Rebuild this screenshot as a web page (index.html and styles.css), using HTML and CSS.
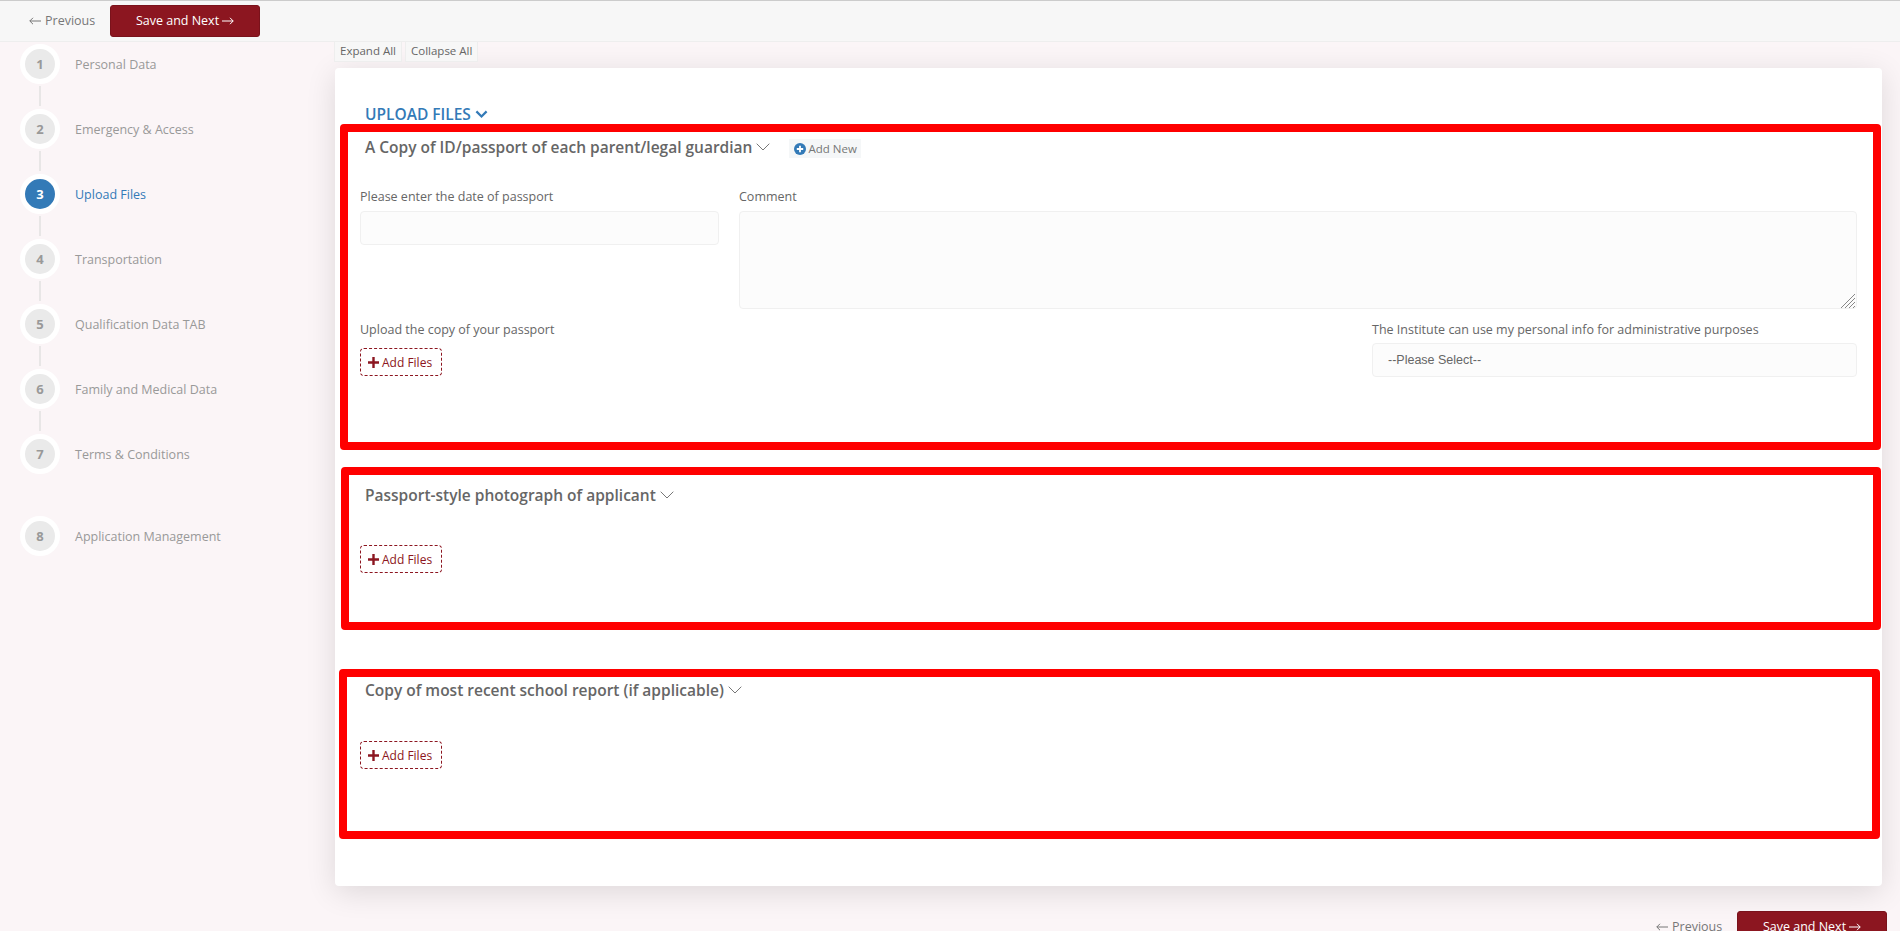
FILE: index.html
```html
<!DOCTYPE html>
<html lang="en">
<head>
<meta charset="utf-8">
<title>Upload Files</title>
<link rel="stylesheet" href="styles.css">
</head>
<body>
<header class="topbar">
  <a class="prev"><svg class="arrow" viewBox="0 0 12 8"><path d="M12 4H.8M4 .8.8 4 4 7.2"/></svg>Previous</a>
  <a class="save">Save and Next<svg class="arrow" viewBox="0 0 12 8"><path d="M0 4h11.2M8 .8 11.2 4 8 7.2"/></svg></a>
</header>
<div class="layout">
  <nav class="steps">
    <div class="step"><span class="dot">1</span><span class="step-name">Personal Data</span></div>
    <div class="step-line"></div>
    <div class="step"><span class="dot">2</span><span class="step-name">Emergency &amp; Access</span></div>
    <div class="step-line"></div>
    <div class="step active"><span class="dot">3</span><span class="step-name">Upload Files</span></div>
    <div class="step-line"></div>
    <div class="step"><span class="dot">4</span><span class="step-name">Transportation</span></div>
    <div class="step-line"></div>
    <div class="step"><span class="dot">5</span><span class="step-name">Qualification Data TAB</span></div>
    <div class="step-line"></div>
    <div class="step"><span class="dot">6</span><span class="step-name">Family and Medical Data</span></div>
    <div class="step-line"></div>
    <div class="step"><span class="dot">7</span><span class="step-name">Terms &amp; Conditions</span></div>
    <div class="step last"><span class="dot">8</span><span class="step-name">Application Management</span></div>
  </nav>
  <main class="content">
    <div class="tools">
      <button class="tool">Expand All</button>
      <button class="tool">Collapse All</button>
    </div>
    <section class="card">
      <h2 class="heading">UPLOAD FILES<svg class="chev-bold" viewBox="0 0 13 9"><path d="M1.400 1.400 6.500 6.500l5.100-5.100"/></svg></h2>

      <div class="doc-title first">
        <h3>A Copy of ID/passport of each parent/legal guardian</h3>
        <svg class="chev" viewBox="0 0 14 8"><path d="M.7.7 7 7l6.300-6.300"/></svg>
        <a class="add-new"><svg class="plus-circle" viewBox="0 0 12 12"><circle cx="6" cy="6" r="6"/><path d="M6 2.800v6.400M2.800 6h6.400"/></svg>Add New</a>
      </div>
      <div class="form-top">
        <div>
          <label class="label">Please enter the date of passport</label>
          <input class="field" type="text">
        </div>
        <div>
          <label class="label">Comment</label>
          <div class="area-wrap">
            <textarea class="area"></textarea>
            <svg class="grip" viewBox="0 0 14 14"><path d="M0 14 14 0M4 14 14 4M8 14l6-6M12 14l2-2"/></svg>
          </div>
        </div>
      </div>
      <div class="form-bottom">
        <div>
          <label class="label">Upload the copy of your passport</label>
          <a class="add-files near"><svg class="plus" viewBox="0 0 11 11"><path d="M5.500 0v11M0 5.500h11"/></svg>Add Files</a>
        </div>
        <div class="select-col">
          <label class="label">The Institute can use my personal info for administrative purposes</label>
          <select class="field picker"><option>--Please Select--</option></select>
        </div>
      </div>

      <div class="doc-title second">
        <h3>Passport-style photograph of applicant</h3>
        <svg class="chev" viewBox="0 0 14 8"><path d="M.7.7 7 7l6.300-6.300"/></svg>
      </div>
      <a class="add-files far"><svg class="plus" viewBox="0 0 11 11"><path d="M5.500 0v11M0 5.500h11"/></svg>Add Files</a>

      <div class="doc-title third">
        <h3>Copy of most recent school report (if applicable)</h3>
        <svg class="chev" viewBox="0 0 14 8"><path d="M.7.7 7 7l6.300-6.300"/></svg>
      </div>
      <a class="add-files far last-file"><svg class="plus" viewBox="0 0 11 11"><path d="M5.500 0v11M0 5.500h11"/></svg>Add Files</a>
    </section>
    <footer class="bottombar">
      <a class="prev"><svg class="arrow" viewBox="0 0 12 8"><path d="M12 4H.8M4 .8.8 4 4 7.2"/></svg>Previous</a>
      <a class="save">Save and Next<svg class="arrow" viewBox="0 0 12 8"><path d="M0 4h11.2M8 .8 11.2 4 8 7.2"/></svg></a>
    </footer>
  </main>
</div>
<div class="mark mark-a"></div>
<div class="mark mark-b"></div>
<div class="mark mark-c"></div>
</body>
</html>
```
FILE: styles.css
```css
* { box-sizing: border-box; }
html, body { height: 100%; overflow: hidden; }
body {
  margin: 0;
  background: #fbf5f7;
  color: #666;
  font: 12.500px/20px "Open Sans", sans-serif;
}
h2, h3 { margin: 0; }

.topbar {
  height: 42px;
  padding: 4px 0 0 29px;
  display: flex;
  align-items: flex-start;
  background: #f7f7f7;
  border-top: 1px solid #ccc;
  border-bottom: 1px solid #eee;
}
.prev {
  height: 32px;
  width: 81px;
  display: flex;
  align-items: center;
  gap: 4px;
  color: #777;
}
.save {
  width: 150px;
  height: 32px;
  display: flex;
  align-items: center;
  justify-content: center;
  gap: 3px;
  color: #fff;
  background: #8c1620;
  border: 1px solid #7a121b;
  border-radius: 3px;
}
.arrow { width: 12px; height: 8px; fill: none; stroke: currentColor; stroke-width: 1; }

.layout { display: flex; align-items: flex-start; }
.steps { width: 334px; flex: none; padding: 2px 0 0 20px; }
.step { display: flex; align-items: center; gap: 15px; color: #999; }
.step-name { padding-top: 2px; }
.dot {
  width: 40px;
  height: 40px;
  flex: none;
  display: flex;
  align-items: center;
  justify-content: center;
  background: #eaeaea;
  border: 5px solid #fff;
  border-radius: 50%;
  font-weight: 700;
  font-size: 13px;
}
.step-line { width: 2px; height: 20px; margin: 2px 0 3px 19px; background: #e8e6e6; }
.step.last { margin-top: 42px; }
.step.active { color: #337ab7; }
.step.active .dot { background: #337ab7; color: #fff; }

.content { width: 1548px; flex: none; }
.tools { display: flex; gap: 3px; height: 27px; align-items: flex-start; margin-top: -1px; }
.tool {
  height: 21px;
  padding: 0 5px 2px;
  font: 11.500px/17px "Open Sans", sans-serif;
  color: #666;
  background: #f7f7f7;
  border: 1px solid #eee;
}
.card {
  height: 818px;
  margin-left: 1px;
  padding: 36px 25px 0 25px;
  background: #fff;
  border-radius: 4px;
  box-shadow: 0 6px 30px rgba(0, 0, 0, .12);
}
.heading {
  height: 20px;
  padding-left: 5px;
  display: flex;
  align-items: center;
  gap: 4px;
  font-size: 15.500px;
  font-weight: 600;
  color: #337ab7;
}
.chev-bold { width: 13px; height: 9px; fill: none; stroke: #337ab7; stroke-width: 2.200; }
.doc-title { height: 21px; padding-left: 5px; display: flex; align-items: center; }
.doc-title h3 { font-size: 15.500px; font-weight: 600; color: #666; }
.doc-title.first { margin-top: 12px; }
.doc-title.second { margin-top: 107px; }
.doc-title.third { margin-top: 106px; }
.chev { width: 14px; height: 8px; margin-left: 4px; fill: none; stroke: #777; stroke-width: 1; }
.add-new {
  width: 72px;
  height: 19px;
  margin: 4px 0 0 19px;
  display: flex;
  align-items: center;
  gap: 2px;
  padding-left: 5px;
  font-size: 11.500px;
  color: #777;
  background: #f5f7f8;
}
.plus-circle { width: 12px; height: 12px; flex: none; }
.plus-circle circle { fill: #337ab7; }
.plus-circle path { stroke: #fff; stroke-width: 1.800; }

.label { display: block; height: 20px; margin-bottom: 4px; color: #666; }
.form-top { display: grid; grid-template-columns: 359px 1fr; column-gap: 20px; margin-top: 30px; }
.field, .area {
  display: block;
  width: 100%;
  background: #fcfcfc;
  border: 1px solid #f0f0f0;
  border-radius: 4px;
}
.field { height: 34px; }
.area-wrap { position: relative; }
.area { height: 98px; resize: none; }
.grip {
  position: absolute;
  right: 2px;
  bottom: 1px;
  width: 14px;
  height: 14px;
  fill: none;
  stroke: #888;
  stroke-width: 1;
}
.form-bottom { display: flex; justify-content: space-between; margin-top: 11px; }
.form-bottom .label { margin-bottom: 3px; }
.select-col { width: 485px; }
.picker {
  appearance: none;
  padding-left: 15px;
  font: 12.500px "Liberation Sans", sans-serif;
  color: #666;
}
.add-files {
  width: 82px;
  height: 28px;
  display: flex;
  align-items: center;
  gap: 3px;
  padding: 1px 0 0 7px;
  font-size: 12px;
  color: #8c1620;
  border: 1px dashed #8c1620;
  border-radius: 4px;
}
.add-files.near { margin-top: 8px; }
.add-files.far { margin-top: 40px; }
.add-files.last-file { margin-top: 41px; }
.plus { width: 11px; height: 11px; flex: none; stroke: #8c1620; stroke-width: 2.400; }

.bottombar { display: flex; justify-content: flex-end; margin: 25px -5px 0 0; }

.mark {
  position: absolute;
  border: 8px solid #f00;
  border-radius: 4px;
  pointer-events: none;
}
.mark-a { left: 340px; top: 124px; width: 1541px; height: 326px; }
.mark-b { left: 341px; top: 467px; width: 1540px; height: 163px; }
.mark-c { left: 339px; top: 669px; width: 1541px; height: 170px; }
```
